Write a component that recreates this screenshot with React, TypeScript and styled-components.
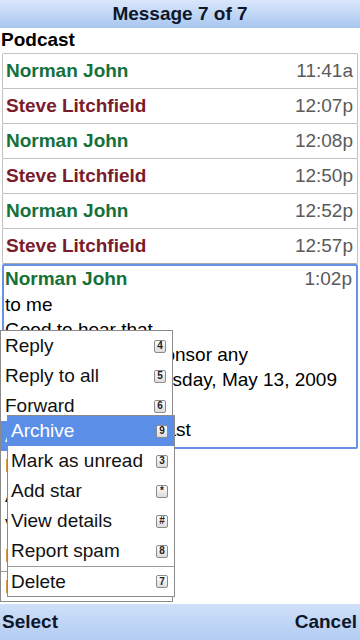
import React from "react";
import styled, { createGlobalStyle } from "styled-components";

const Global = createGlobalStyle`
  html, body { margin: 0; padding: 0; background: #fff; }
  body { font-family: "Liberation Sans", Arial, sans-serif; }
`;

const Screen = styled.div`
  position: relative;
  width: 360px;
  height: 640px;
  overflow: hidden;
  display: flex;
  flex-direction: column;
  background: #fff;
`;

const TitleBar = styled.div`
  height: 28px;
  flex: none;
  display: flex;
  align-items: center;
  justify-content: center;
  background: linear-gradient(#dae7fb, #a8c6ef);
  color: #0e1629;
  font-weight: bold;
  font-size: 19px;
`;

const Folder = styled.div`
  height: 24px;
  flex: none;
  display: flex;
  align-items: center;
  padding-left: 1px;
  font-weight: bold;
  font-size: 19px;
  color: #000;
  margin-bottom: 1px;
`;

const Row = styled.div`
  box-sizing: border-box;
  height: 36px;
  flex: none;
  margin: 0 2px -1px 2px;
  border: 1px solid #c2c2c2;
  border-bottom-color: #a8a8a8;
  border-radius: 2px;
  display: flex;
  align-items: center;
  justify-content: space-between;
  padding: 0 4px 0 3px;
`;

const Name = styled.span<{ $c: string }>`
  font-weight: bold;
  font-size: 19px;
  color: ${(p) => p.$c};
`;

const Time = styled.span`
  font-size: 19px;
  color: #5a5a5a;
`;

const Card = styled.div`
  box-sizing: border-box;
  height: 185px;
  flex: none;
  margin: 1px 2px 0 2px;
  border: 2px solid #6592e3;
  border-radius: 2px;
  padding: 0 3px 0 1px;
  display: flex;
  flex-direction: column;
  overflow: hidden;
`;

const CardHead = styled.div`
  height: 26px;
  display: flex;
  align-items: center;
  justify-content: space-between;
  padding-right: 1px;
`;

const Line = styled.div`
  height: 25px;
  line-height: 25px;
  font-size: 19px;
  color: #000;
  white-space: nowrap;
  overflow: hidden;
`;

const Spacer = styled.div`
  flex: 1;
`;

const SoftKeys = styled.div`
  height: 36px;
  flex: none;
  display: flex;
  align-items: center;
  justify-content: space-between;
  padding: 0 3px 0 2px;
  background: linear-gradient(#cfe0f8, #b2ccf2);
  color: #0e1629;
  font-weight: bold;
  font-size: 19px;
`;

const Menu = styled.div<{ $left: number; $top: number; $w: number }>`
  position: absolute;
  left: ${(p) => p.$left}px;
  top: ${(p) => p.$top}px;
  width: ${(p) => p.$w}px;
  box-sizing: border-box;
  background: #fff;
  border: 1px solid #8a8a8a;
  display: flex;
  flex-direction: column;
`;

const Item = styled.div<{ $active?: boolean; $pad: number; $sep?: boolean }>`
  height: 30px;
  flex: none;
  box-sizing: border-box;
  display: flex;
  align-items: center;
  justify-content: space-between;
  padding: 0 6px 0 ${(p) => p.$pad}px;
  font-size: 19px;
  color: ${(p) => (p.$active ? "#fff" : "#111")};
  background: ${(p) => (p.$active ? "#5b8fe7" : "transparent")};
  border-top: ${(p) => (p.$sep ? "1px solid #9a9a9a" : "none")};
  white-space: nowrap;
`;

const Key = styled.span`
  box-sizing: border-box;
  width: 12px;
  height: 13px;
  flex: none;
  display: flex;
  align-items: center;
  justify-content: center;
  border: 1px solid #8c8c8c;
  border-radius: 2px;
  background: linear-gradient(#ffffff, #dcdcdc);
  color: #222;
  font-size: 10px;
  font-weight: bold;
  line-height: 1;
`;

const GREEN = "#16703a";
const RED = "#7a1b2c";

const rows = [
  { n: "Norman John", c: GREEN, t: "11:41a" },
  { n: "Steve Litchfield", c: RED, t: "12:07p" },
  { n: "Norman John", c: GREEN, t: "12:08p" },
  { n: "Steve Litchfield", c: RED, t: "12:50p" },
  { n: "Norman John", c: GREEN, t: "12:52p" },
  { n: "Steve Litchfield", c: RED, t: "12:57p" },
];

const backItems = [
  ["Reply", "4"],
  ["Reply to all", "5"],
  ["Forward", "6"],
  ["Archive", "9"],
  ["Mark as unread", "3"],
  ["Add star", "*"],
  ["View details", "#"],
  ["Report spam", "8"],
  ["Delete", "7"],
];

const frontItems = [
  ["Archive", "9"],
  ["Mark as unread", "3"],
  ["Add star", "*"],
  ["View details", "#"],
  ["Report spam", "8"],
  ["Delete", "7"],
];

export default function App() {
  return (
    <>
      <Global />
      <Screen>
        <TitleBar>Message 7 of 7</TitleBar>
        <Folder>Podcast</Folder>
        {rows.map((r, i) => (
          <Row key={i}>
            <Name $c={r.c}>{r.n}</Name>
            <Time>{r.t}</Time>
          </Row>
        ))}
        <Card>
          <CardHead>
            <Name $c={GREEN}>Norman John</Name>
            <Time>1:02p</Time>
          </CardHead>
          <Line>to me</Line>
          <Line>Good to hear that</Line>
          <Line>we would like to sponsor any</Line>
          <Line>episode. On Wednesday, May 13, 2009</Line>
          <Line>Steve wrote:</Line>
          <Line>is for the next podcast</Line>
        </Card>
        <Spacer />
        <SoftKeys>
          <span>Select</span>
          <span>Cancel</span>
        </SoftKeys>

        <Menu $left={0} $top={330} $w={173}>
          {backItems.map(([l, k], i) => (
            <Item key={i} $pad={4} $active={i === 3} $sep={i === 8}>
              <span>{l}</span>
              <Key>{k}</Key>
            </Item>
          ))}
        </Menu>
        <Menu $left={7} $top={415} $w={168}>
          {frontItems.map(([l, k], i) => (
            <Item key={i} $pad={3} $active={i === 0} $sep={i === 5}>
              <span>{l}</span>
              <Key>{k}</Key>
            </Item>
          ))}
        </Menu>
      </Screen>
    </>
  );
}
